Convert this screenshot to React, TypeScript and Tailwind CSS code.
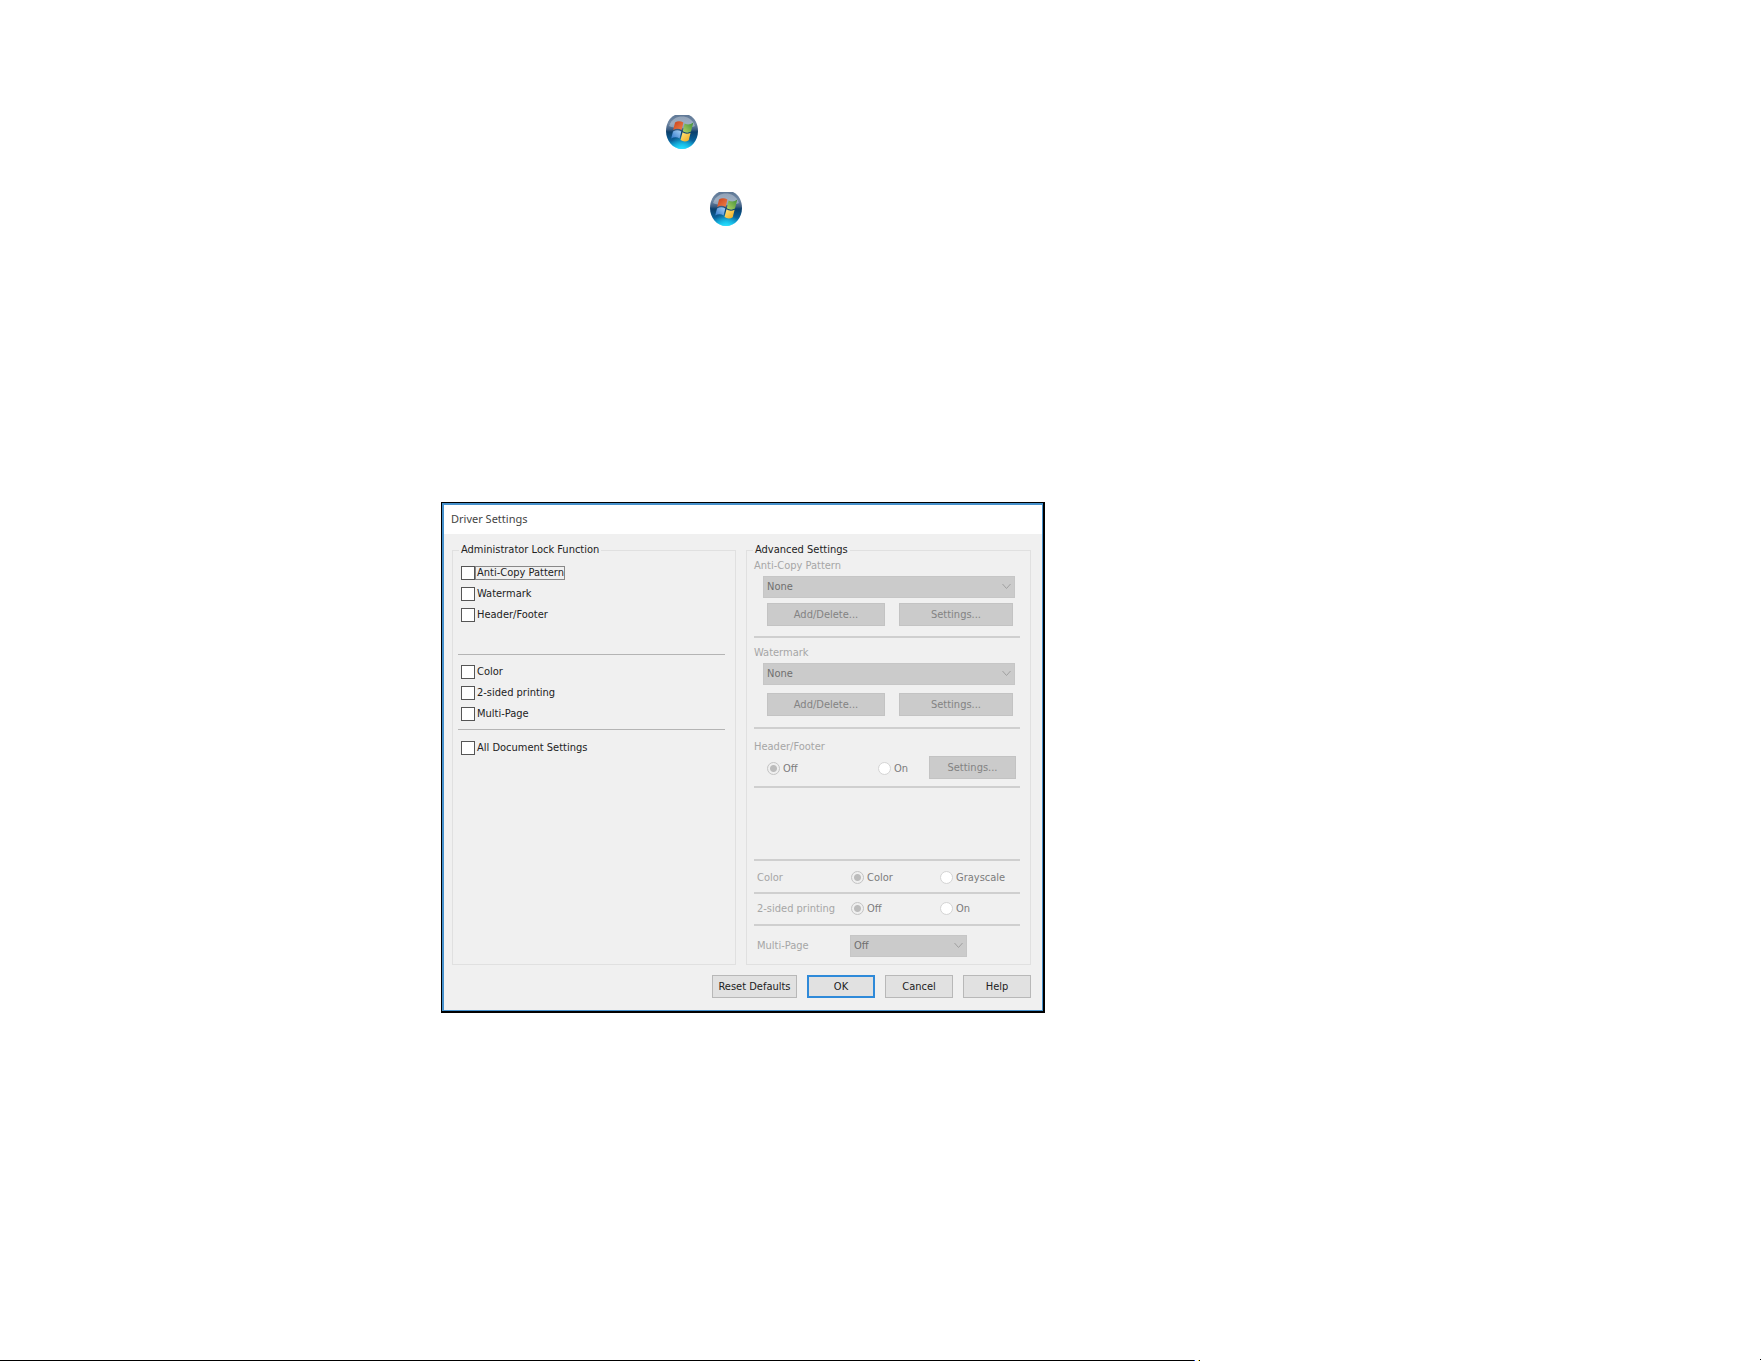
function StartOrb({ id, className = '' }: { id: string; className?: string }) {
  return (
    <svg className={`w-8 h-[34px] ${className}`} viewBox="0 0 32 34" role="img" aria-label="Start">
      <defs>
        <linearGradient id={`${id}-base`} x1="0" y1="0" x2="0" y2="1">
          <stop offset="0" stopColor="#5f7896" />
          <stop offset="0.25" stopColor="#7088a4" />
          <stop offset="0.42" stopColor="#3f5f84" />
          <stop offset="0.5" stopColor="#0b3f6b" />
          <stop offset="0.75" stopColor="#0a629b" />
          <stop offset="0.92" stopColor="#10a2d6" />
          <stop offset="1" stopColor="#3fd0f0" />
        </linearGradient>
        <radialGradient id={`${id}-glow`} cx="0.5" cy="1" r="0.4">
          <stop offset="0" stopColor="#22e0ff" stopOpacity="0.9" />
          <stop offset="1" stopColor="#22e0ff" stopOpacity="0" />
        </radialGradient>
        <linearGradient id={`${id}-shine`} x1="0" y1="0" x2="0" y2="1">
          <stop offset="0" stopColor="#fff" stopOpacity="0.3" />
          <stop offset="1" stopColor="#dfe8f2" stopOpacity="0.4" />
        </linearGradient>
        <linearGradient id={`${id}-red`} x1="0" y1="0" x2="1" y2="1">
          <stop offset="0" stopColor="#c9401a" />
          <stop offset="1" stopColor="#f0824a" />
        </linearGradient>
        <linearGradient id={`${id}-green`} x1="1" y1="0" x2="0" y2="1">
          <stop offset="0" stopColor="#3f8f35" />
          <stop offset="1" stopColor="#b4d568" />
        </linearGradient>
        <linearGradient id={`${id}-blue`} x1="0" y1="1" x2="1" y2="0">
          <stop offset="0" stopColor="#2f78cc" />
          <stop offset="1" stopColor="#a8d2f4" />
        </linearGradient>
        <linearGradient id={`${id}-yellow`} x1="0" y1="0" x2="1" y2="1">
          <stop offset="0" stopColor="#ffe682" />
          <stop offset="1" stopColor="#f0a818" />
        </linearGradient>
      </defs>
      <path d="M9 0H23C29 3 32 9 32 16C32 26 25 34 16 34S0 26 0 16C0 9 3 3 9 0Z" fill={`url(#${id}-base)`} />
      <ellipse cx="16" cy="17" rx="16" ry="17" fill={`url(#${id}-glow)`} />
      <path d="M3 11C6 3.500 11 1.500 16 1.500S26 3.500 29 11C24 14 8 14 3 11Z" fill={`url(#${id}-shine)`} />
      <path d="M9 7.500C11.500 5.800 14.800 5.800 17.400 7.600L15.600 15C13 13.300 9.900 13.300 7.200 15Z" fill={`url(#${id}-red)`} />
      <path d="M18.600 8.400C21.200 10 24.300 10 27.300 7.600L25 16.600C22.300 18.200 19.400 18 16.800 16.200Z" fill={`url(#${id}-green)`} />
      <path d="M7 16.400C9.600 14.700 12.800 14.700 15.300 16.400L13.600 23.600C11 21.900 7.900 21.900 5.200 23.600Z" fill={`url(#${id}-blue)`} />
      <path d="M16.500 17.300C18.900 19 22 19.100 24.600 17.700L22.700 25.200C20 27 17.100 26.800 14.500 25.100Z" fill={`url(#${id}-yellow)`} />
    </svg>
  )
}

function CheckRow({ id, label, focused }: { id: string; label: string; focused?: boolean }) {
  return (
    <div className="flex items-center h-[21px]">
      <input
        id={id}
        type="checkbox"
        className="appearance-none w-[14px] h-[14px] shrink-0 bg-white border border-[#555] checked:bg-[#555]"
      />
      <label
        htmlFor={id}
        className={`pl-px leading-3 border ${focused ? 'border-[#888]' : 'border-transparent'}`}
      >
        {label}
      </label>
    </div>
  )
}

function RadioOption({ name, label, checked, className = '' }: { name: string; label: string; checked?: boolean; className?: string }) {
  return (
    <label className={`flex items-center gap-[3px] h-[21px] text-[#7c7c7c] ${className}`}>
      <input
        type="radio"
        name={name}
        defaultChecked={checked}
        disabled
        className="appearance-none w-[13px] h-[13px] shrink-0 rounded-full bg-white border border-[#d4d4d4] checked:bg-[#efefef] checked:border-[#c4c4c4] checked:bg-[radial-gradient(circle,#bcbcbc_3px,transparent_4px)]"
      />
      {label}
    </label>
  )
}

function DisabledSelect({ id, value, className = '' }: { id: string; value: string; className?: string }) {
  return (
    <div className={`relative ${className}`}>
      <select
        id={id}
        disabled
        className="appearance-none block w-full h-[22px] pl-[3px] bg-[#cbcbcb] border border-[#c6c6c6] text-[#6f6f6f] opacity-100"
      >
        <option>{value}</option>
      </select>
      <svg className="absolute right-1 top-[7px] w-[9px] h-[7px]" viewBox="0 0 9 7" fill="none" stroke="#a0a0a0">
        <path d="M0.500 1L4.500 5.500L8.500 1" />
      </svg>
    </div>
  )
}

function DisabledButton({ children, className = '' }: { children: string; className?: string }) {
  return (
    <button disabled className={`h-[23px] bg-[#cbcbcb] border border-[#c3c3c3] text-[#838383] ${className}`}>
      {children}
    </button>
  )
}

function Divider({ className = '' }: { className?: string }) {
  return <hr className={`border-0 h-[2px] bg-[#cfcfcf] ${className}`} />
}

const footerButton = 'h-[23px] bg-[#e1e1e1] border border-[#b8b8b8] text-[#222]'

function DriverSettings() {
  return (
    <section
      role="dialog"
      aria-labelledby="dialog-title"
      className="w-full max-w-[604px] bg-[#f0f0f0] border-t border-l border-r-2 border-b-2 border-black text-[11px] leading-4 text-[#222] font-['DejaVu_Sans_Condensed','DejaVu_Sans',sans-serif]"
    >
      <div className="border-t-2 border-l-2 border-r border-b border-[#4590cb]">
        <header className="h-[29px] pb-[2px] bg-white flex items-center pl-[7px]">
          <h1 id="dialog-title" className="text-[#444] font-['Noto_Sans',sans-serif]">Driver Settings</h1>
        </header>

        <div className="pt-2 pb-3 pl-2 pr-[11px]">
          <div className="flex items-stretch gap-[10px]">
            <fieldset className="w-[284px] border border-[#e0e0e0] px-[5px]">
              <legend className="ml-px px-[2px]">Administrator Lock Function</legend>
              <div className="pt-1 pl-[3px]">
                <CheckRow id="lock-anticopy" label="Anti-Copy Pattern" focused />
                <CheckRow id="lock-watermark" label="Watermark" />
                <CheckRow id="lock-header" label="Header/Footer" />
              </div>
              <hr className="border-0 h-px bg-[#b4b4b4] mt-[29px] mr-[5px]" />
              <div className="pt-[6px] pl-[3px]">
                <CheckRow id="lock-color" label="Color" />
                <CheckRow id="lock-duplex" label="2-sided printing" />
                <CheckRow id="lock-multipage" label="Multi-Page" />
              </div>
              <hr className="border-0 h-px bg-[#b4b4b4] mt-[5px] mr-[5px]" />
              <div className="pt-[7px] pl-[3px]">
                <CheckRow id="lock-all" label="All Document Settings" />
              </div>
            </fieldset>

            <fieldset className="flex-1 min-w-0 border border-[#e0e0e0] pl-[7px] pr-[10px] pb-[7px]">
              <legend className="-ml-px px-[2px]">Advanced Settings</legend>

              <label htmlFor="anticopy" className="block h-[18px] text-[#a6a6a6]">Anti-Copy Pattern</label>
              <DisabledSelect id="anticopy" value="None" className="ml-[9px] mr-[5px]" />
              <div className="flex justify-between mt-[5px] ml-[13px] mr-[7px]">
                <DisabledButton className="w-[118px]">Add/Delete...</DisabledButton>
                <DisabledButton className="w-[114px]">Settings...</DisabledButton>
              </div>
              <Divider className="mt-[10px]" />

              <label htmlFor="watermark" className="block h-[18px] mt-[7px] text-[#a6a6a6]">Watermark</label>
              <DisabledSelect id="watermark" value="None" className="ml-[9px] mr-[5px]" />
              <div className="flex justify-between mt-2 ml-[13px] mr-[7px]">
                <DisabledButton className="w-[118px]">Add/Delete...</DisabledButton>
                <DisabledButton className="w-[114px]">Settings...</DisabledButton>
              </div>
              <Divider className="mt-[11px]" />

              <div className="h-4 mt-[10px] text-[#a6a6a6]">Header/Footer</div>
              <div className="flex items-end mt-px pl-[13px] pr-[4px]">
                <RadioOption name="header" label="Off" checked className="w-[111px]" />
                <RadioOption name="header" label="On" />
                <DisabledButton className="w-[87px] ml-auto">Settings...</DisabledButton>
              </div>
              <Divider className="mt-[7px]" />

              <Divider className="mt-[71px]" />
              <div className="flex items-center mt-[6px] pl-[3px]">
                <span className="w-[94px] text-[#a6a6a6]">Color</span>
                <RadioOption name="color" label="Color" checked className="w-[89px]" />
                <RadioOption name="color" label="Grayscale" />
              </div>
              <Divider className="mt-1" />
              <div className="flex items-center mt-1 pl-[3px]">
                <span className="w-[94px] text-[#a6a6a6]">2-sided printing</span>
                <RadioOption name="duplex" label="Off" checked className="w-[89px]" />
                <RadioOption name="duplex" label="On" />
              </div>
              <Divider className="mt-[5px]" />
              <div className="flex items-center mt-[9px] pl-[3px]">
                <label htmlFor="multipage" className="w-[93px] text-[#a6a6a6]">Multi-Page</label>
                <DisabledSelect id="multipage" value="Off" className="w-[117px]" />
              </div>
            </fieldset>
          </div>

          <footer className="flex justify-end gap-[10px] mt-[10px]">
            <button className={`${footerButton} w-[85px]`}>Reset Defaults</button>
            <button className="h-[23px] w-[68px] bg-[#e1e1e1] border-2 border-[#2f8ad9] text-[#222]">OK</button>
            <button className={`${footerButton} w-[68px]`}>Cancel</button>
            <button className={`${footerButton} w-[68px]`}>Help</button>
          </footer>
        </div>
      </div>
    </section>
  )
}

export default function App() {
  return (
    <div className="min-h-screen bg-white flex flex-col">
      <main className="flex-1 pt-[115px] pl-[441px]">
        <StartOrb id="orb-a" className="block ml-[225px]" />
        <StartOrb id="orb-b" className="block ml-[269px] mt-[43px] mb-[276px]" />
        <DriverSettings />
      </main>

      {/* page rule */}
      <div className="flex items-end justify-between">
        <div className="flex w-[1200px]">
          <div className="h-px flex-1 bg-black" />
          <div className="h-px w-px bg-blue-700" />
          <div className="h-px w-px ml-[3px] bg-yellow-300" />
          <div className="h-px w-px bg-black" />
        </div>
        <div className="h-px w-px mb-px bg-black" />
      </div>
    </div>
  )
}
